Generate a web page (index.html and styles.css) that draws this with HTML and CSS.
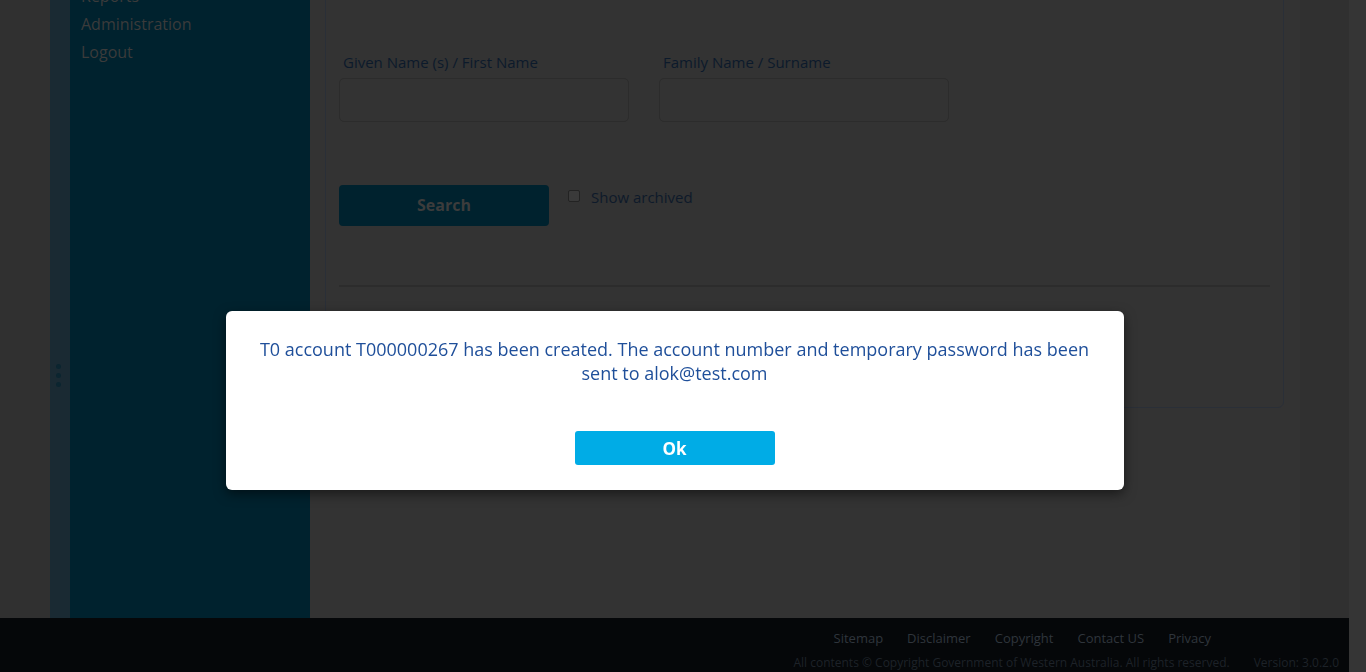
FILE: index.html
```html
<!DOCTYPE html>
<html lang="en">
<head>
<meta charset="utf-8">
<title>Search accounts</title>
<link rel="stylesheet" href="styles.css">
</head>
<body>
<div class="page">
  <div class="main-col">
    <div class="body-row">
      <div class="gutter-left"></div>
      <div class="strip">
        <span class="dots"><i></i><i></i><i></i></span>
      </div>
      <nav class="sidebar">
        <a class="nav-link">Reports</a>
        <a class="nav-link">Administration</a>
        <a class="nav-link">Logout</a>
      </nav>
      <main class="content">
        <section class="card">
          <div class="fields">
            <div class="field">
              <label class="field-label">Given Name (s) / First Name</label>
              <div class="input"></div>
            </div>
            <div class="field">
              <label class="field-label">Family Name / Surname</label>
              <div class="input"></div>
            </div>
          </div>
          <div class="actions">
            <button class="btn-search">Search</button>
            <label class="check"><span class="box"></span>Show archived</label>
          </div>
          <hr class="divider">
        </section>
      </main>
      <div class="gutter-right"></div>
    </div>
    <footer class="footer">
      <div class="links">
        <a>Sitemap</a><a>Disclaimer</a><a>Copyright</a><a>Contact US</a><a>Privacy</a>
      </div>
      <div class="legal">
        <span>All contents © Copyright Government of Western Australia. All rights reserved.</span>
        <span>Version: 3.0.2.0</span>
      </div>
    </footer>
  </div>
  <div class="scrollbar"></div>
</div>

<div class="modal-layer">
  <div class="modal">
    <p class="modal-text">T0 account T000000267 has been created. The account number and temporary password has been sent to alok@test.com</p>
    <button class="btn-ok">Ok</button>
  </div>
</div>
</body>
</html>
```

FILE: styles.css
```css
* { box-sizing: border-box; }
html, body { margin: 0; padding: 0; height: 100%; }
body {
  font-family: "Open Sans", "Liberation Sans", sans-serif;
  background: #333333;
  overflow: hidden;
}
.page {
  display: flex;
  height: 672px;
}
.main-col {
  width: 1349px;
  display: flex;
  flex-direction: column;
}
.scrollbar {
  width: 17px;
  background: #353535;
}
.body-row {
  display: flex;
  height: 618px;
  overflow: hidden;
}
.gutter-left {
  width: 50px;
  background: #303030;
}
.gutter-right {
  width: 49px;
  background: #303030;
}
.strip {
  width: 20px;
  background: #1a2a33;
  display: flex;
  align-items: flex-start;
  justify-content: flex-start;
  padding: 364px 0 0 6px;
}
.dots {
  display: flex;
  flex-direction: column;
  gap: 4px;
}
.dots i {
  display: block;
  width: 5px;
  height: 5px;
  border-radius: 50%;
  background: #0b2530;
}
.sidebar {
  width: 240px;
  background: #00222e;
  display: flex;
  flex-direction: column;
  padding: 0 0 0 11px;
  margin-top: -19px;
}
.nav-link {
  font-size: 16px;
  line-height: 28px;
  color: #3b3b3b;
  transform: translateY(0.5px);
}
.content {
  flex: 1;
  background: #333333;
  padding: 0 16px 0 15px;
}
.card {
  margin-top: -20px;
  border: 1px solid #2a2f37;
  border-radius: 6px;
  height: 428px;
  padding: 71px 13px 0 13px;
}
.fields {
  display: flex;
  gap: 30px;
}
.field {
  display: flex;
  flex-direction: column;
  width: 290px;
}
.field-label {
  font-size: 15px;
  line-height: 20px;
  color: #0c1a2b;
  padding-left: 4px;
  height: 26px;
}
.input {
  height: 44px;
  border: 1px solid #2c2c2c;
  border-radius: 5px;
  background: #333;
}
.actions {
  display: flex;
  align-items: flex-start;
  gap: 19px;
  margin-top: 63px;
}
.btn-search {
  width: 210px;
  height: 41px;
  border: none;
  border-radius: 4px;
  background: #00222e;
  color: #3c3c3c;
  font-family: inherit;
  font-weight: 700;
  font-size: 16px;
  line-height: 38px;
  padding: 0 0 2px 0;
}
.check {
  display: flex;
  align-items: flex-start;
  gap: 11px;
  font-size: 15px;
  line-height: 24px;
  color: #0e1a2a;
}
.box {
  width: 12px;
  height: 12px;
  margin-top: 5px;
  border: 1px solid #232323;
  border-radius: 2px;
  background: #3a3a3a;
}
.divider {
  border: none;
  border-top: 2px solid #2c2c2c;
  margin: 59px 0 0 0;
}
.footer {
  height: 54px;
  background: #050709;
  display: flex;
  flex-direction: column;
  align-items: stretch;
  padding-top: 11px;
}
.links {
  display: flex;
  justify-content: flex-end;
  padding-right: 126px;
  font-size: 13px;
  line-height: 18px;
}
.links a {
  color: #2f353c;
  margin: 0 12px;
}
.legal {
  display: flex;
  justify-content: flex-end;
  gap: 24px;
  padding-right: 10px;
  font-size: 12px;
  line-height: 16px;
  margin-top: 8px;
  color: #1d2228;
}
.modal-layer {
  position: fixed;
  left: 0;
  top: 0;
  width: 1349px;
  height: 672px;
  display: flex;
  justify-content: center;
  align-items: flex-start;
  padding-top: 311px;
}
.modal {
  width: 898px;
  height: 179px;
  background: #ffffff;
  border-radius: 6px;
  box-shadow: 0 4px 12px rgba(0, 0, 0, 0.5);
  padding: 26px 30px 0 30px;
  display: flex;
  flex-direction: column;
  align-items: center;
}
.modal-text {
  margin: 0;
  text-align: center;
  font-size: 18px;
  line-height: 24px;
  color: #1f4f9a;
}
.btn-ok {
  margin-top: 46px;
  width: 200px;
  height: 34px;
  border: none;
  border-radius: 3px;
  background: #00ace6;
  color: #ffffff;
  font-family: inherit;
  font-weight: 700;
  font-size: 17px;
  padding: 0;
}
```
